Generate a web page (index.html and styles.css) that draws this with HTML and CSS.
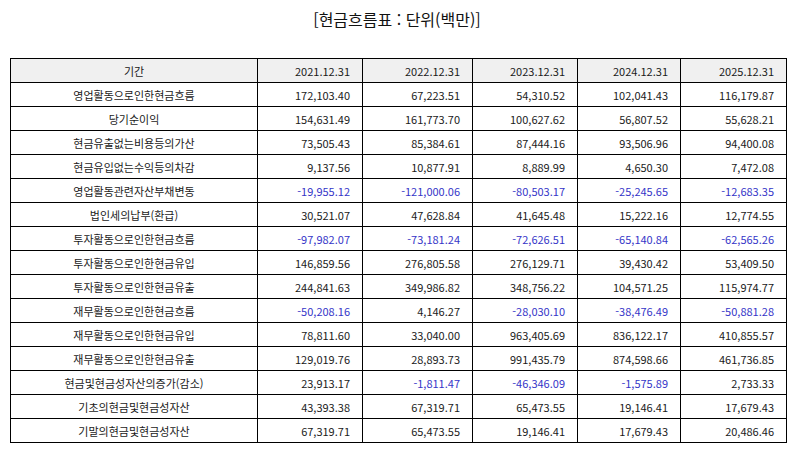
FILE: index.html
```html
<!DOCTYPE html>
<html lang="ko">
<head>
<meta charset="utf-8">
<link rel="stylesheet" href="styles.css">
</head>
<body>
<div class="page">
  <h1 class="title">[현금흐름표 : 단위(백만)]</h1>
  <table class="cf">
    <colgroup>
      <col class="c0"><col class="c1"><col class="c2"><col class="c3"><col class="c4"><col class="c5">
    </colgroup>
    <thead>
      <tr><th class="label">기간</th><th>2021.12.31</th><th>2022.12.31</th><th>2023.12.31</th><th>2024.12.31</th><th>2025.12.31</th></tr>
    </thead>
    <tbody>
      <tr><td class="label">영업활동으로인한현금흐름</td><td>172,103.40</td><td>67,223.51</td><td>54,310.52</td><td>102,041.43</td><td>116,179.87</td></tr>
      <tr><td class="label">당기순이익</td><td>154,631.49</td><td>161,773.70</td><td>100,627.62</td><td>56,807.52</td><td>55,628.21</td></tr>
      <tr><td class="label">현금유출없는비용등의가산</td><td>73,505.43</td><td>85,384.61</td><td>87,444.16</td><td>93,506.96</td><td>94,400.08</td></tr>
      <tr><td class="label">현금유입없는수익등의차감</td><td>9,137.56</td><td>10,877.91</td><td>8,889.99</td><td>4,650.30</td><td>7,472.08</td></tr>
      <tr><td class="label">영업활동관련자산부채변동</td><td class="neg">-19,955.12</td><td class="neg">-121,000.06</td><td class="neg">-80,503.17</td><td class="neg">-25,245.65</td><td class="neg">-12,683.35</td></tr>
      <tr><td class="label">법인세의납부(환급)</td><td>30,521.07</td><td>47,628.84</td><td>41,645.48</td><td>15,222.16</td><td>12,774.55</td></tr>
      <tr><td class="label">투자활동으로인한현금흐름</td><td class="neg">-97,982.07</td><td class="neg">-73,181.24</td><td class="neg">-72,626.51</td><td class="neg">-65,140.84</td><td class="neg">-62,565.26</td></tr>
      <tr><td class="label">투자활동으로인한현금유입</td><td>146,859.56</td><td>276,805.58</td><td>276,129.71</td><td>39,430.42</td><td>53,409.50</td></tr>
      <tr><td class="label">투자활동으로인한현금유출</td><td>244,841.63</td><td>349,986.82</td><td>348,756.22</td><td>104,571.25</td><td>115,974.77</td></tr>
      <tr><td class="label">재무활동으로인한현금흐름</td><td class="neg">-50,208.16</td><td>4,146.27</td><td class="neg">-28,030.10</td><td class="neg">-38,476.49</td><td class="neg">-50,881.28</td></tr>
      <tr><td class="label">재무활동으로인한현금유입</td><td>78,811.60</td><td>33,040.00</td><td>963,405.69</td><td>836,122.17</td><td>410,855.57</td></tr>
      <tr><td class="label">재무활동으로인한현금유출</td><td>129,019.76</td><td>28,893.73</td><td>991,435.79</td><td>874,598.66</td><td>461,736.85</td></tr>
      <tr><td class="label">현금및현금성자산의증가(감소)</td><td>23,913.17</td><td class="neg">-1,811.47</td><td class="neg">-46,346.09</td><td class="neg">-1,575.89</td><td>2,733.33</td></tr>
      <tr><td class="label">기초의현금및현금성자산</td><td>43,393.38</td><td>67,319.71</td><td>65,473.55</td><td>19,146.41</td><td>17,679.43</td></tr>
      <tr><td class="label">기말의현금및현금성자산</td><td>67,319.71</td><td>65,473.55</td><td>19,146.41</td><td>17,679.43</td><td>20,486.46</td></tr>
    </tbody>
  </table>
</div>
</body>
</html>
```
FILE: styles.css
```css
html, body {
  margin: 0;
  padding: 0;
  background: #ffffff;
}
.page {
  padding: 8px 10px 0 10px;
  font-family: "Noto Sans CJK KR", "Noto Sans", sans-serif;
  color: #111111;
}
.title {
  margin: 0;
  font-size: 16px;
  line-height: 22px;
  font-weight: 400;
  text-align: center;
  color: #111111;
}
.cf {
  margin-top: 28px;
  width: 776px;
  table-layout: fixed;
  border-collapse: collapse;
  font-size: 11px;
}
.c0 { width: 247px; }
.c1 { width: 105px; }
.c2 { width: 110px; }
.c3 { width: 105px; }
.c4 { width: 103px; }
.c5 { width: 106px; }
.cf th, .cf td {
  border: 1px solid #000000;
  height: 23px;
  padding: 0 12px 0 4px;
  text-align: right;
  font-weight: 400;
  line-height: 14px;
  white-space: nowrap;
  color: #1a1a1a;
}
.cf thead th {
  background: #f0f0f0;
}
.cf .label {
  text-align: center;
  padding: 0 4px;
}
.cf .neg {
  color: #3535c8;
}
```
